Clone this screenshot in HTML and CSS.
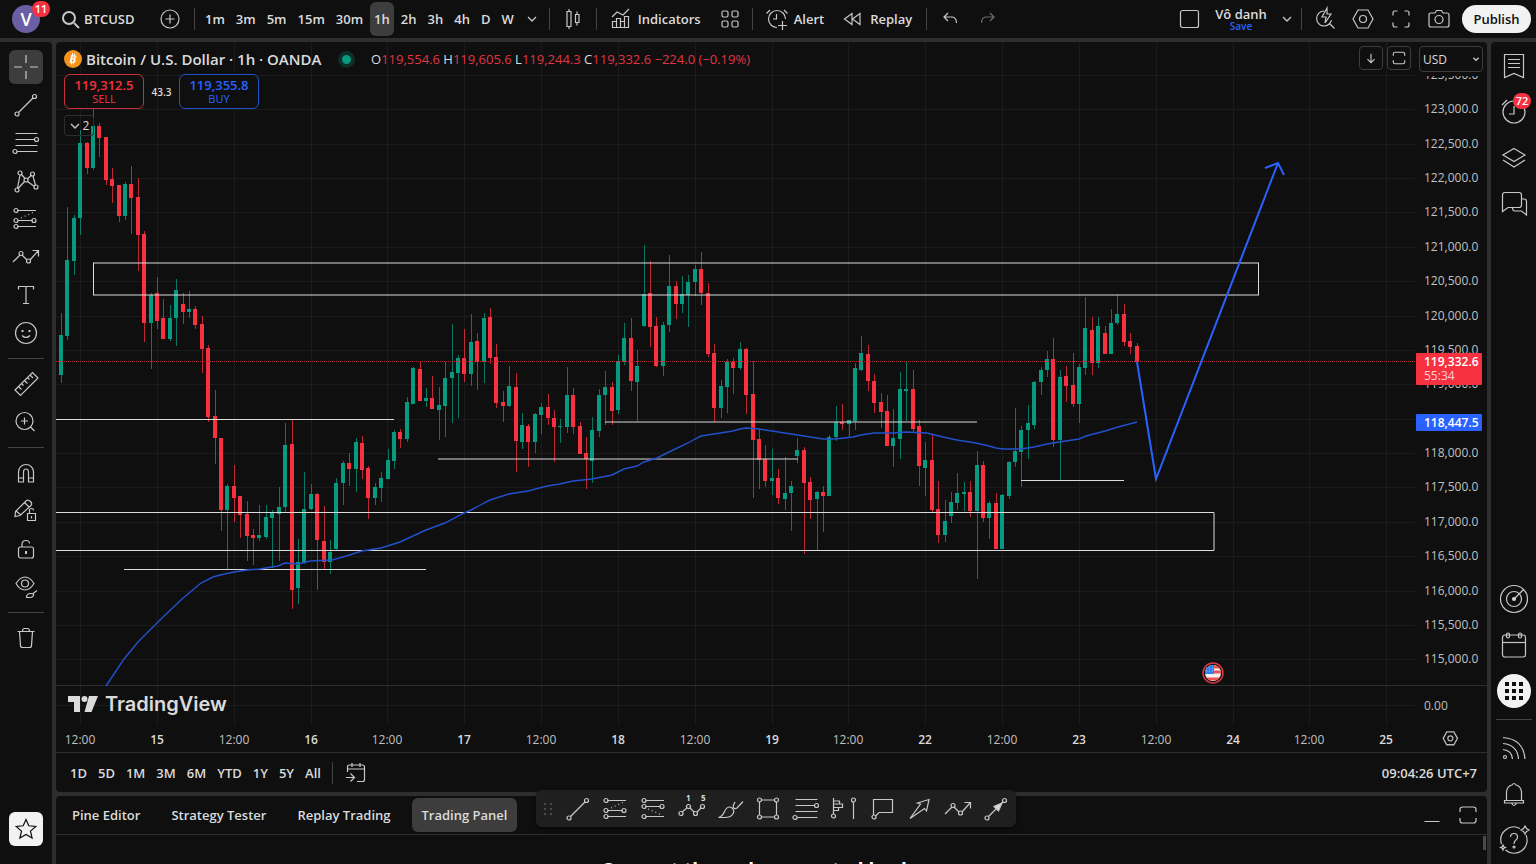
FILE: index.html
```html
<!DOCTYPE html>
<html lang="en">
<head>
    <meta charset="UTF-8">
    <meta name="viewport" content="width=device-width, initial-scale=1.0">
    <title>BTCUSD 119,332.6</title>
    <link rel="stylesheet" href="styles.css">
</head>
<body>
    <svg class="sprite">
        <symbol id="trend" viewBox="0 0 28 28"><circle cx="5" cy="23" r="2"/><circle cx="22.500" cy="5.500" r="2"/><path d="M6.500 21.500 21 7"/></symbol>
        <symbol id="fib" viewBox="0 0 28 28"><path d="M3.500 4.500h22M3.500 10.500h19M3.500 16.500h22M5 22.500h20.500"/><circle cx="24.500" cy="10.500" r="2"/><circle cx="3" cy="22.500" r="2"/></symbol>
        <symbol id="position" viewBox="0 0 28 28"><path d="M5.500 5.500H24M5.500 15.500h15M5.500 21.500H24"/><path stroke-dasharray="1 3" d="m9 13 13-6"/><circle cx="4" cy="5.500" r="2"/><circle cx="4" cy="15.500" r="2"/><circle cx="22" cy="15.500" r="2"/><circle cx="4" cy="21.500" r="2"/></symbol>
        <symbol id="short" viewBox="0 0 28 28"><path d="M5.500 5.500H24M5.500 11.500h15M5.500 21.500H24"/><path stroke-dasharray="1 3" d="m8 14 14 6"/><circle cx="4" cy="5.500" r="2"/><circle cx="4" cy="11.500" r="2"/><circle cx="22" cy="11.500" r="2"/><circle cx="4" cy="21.500" r="2"/></symbol>
        <symbol id="path" viewBox="0 0 28 28"><path d="m1 19 7-7M10 12l5 5M18 17l8-9M20.500 7.500h6v6"/><circle cx="9" cy="10.500" r="2"/><circle cx="16.500" cy="18" r="2"/></symbol>
        <symbol id="hex" viewBox="0 0 28 28"><path d="M9 5h10l5 9-5 9H9l-5-9z"/><circle cx="14" cy="14" r="3.500"/></symbol>
        <symbol id="down" viewBox="0 0 12 12"><path d="m2 4 4 4 4-4"/></symbol>
        <symbol id="frame" viewBox="0 0 28 28"><path d="M6 11V8.500Q6 6 8.500 6h11Q22 6 22 8.500V11M6 17v2.500Q6 22 8.500 22h11q2.500 0 2.500-2.500V17"/></symbol>
    </svg>

    <header class="topbar">
        <button class="avatar" aria-label="Account">V<span class="badge">11</span></button>
        <button class="symbol-search"><svg class="icon" viewBox="0 0 28 28"><path stroke-width="2" d="m18 18 5 5"/><circle stroke-width="2" cx="13" cy="13" r="6"/></svg>BTCUSD</button>
        <button class="tool add" aria-label="Compare"><svg class="icon" viewBox="0 0 28 28"><circle cx="14" cy="14" r="9"/><path d="M14 9.500v9M9.500 14h9"/></svg></button>
        <span class="sep"></span>
        <nav class="intervals">
            <button>1m</button>
            <button>3m</button>
            <button>5m</button>
            <button>15m</button>
            <button>30m</button>
            <button class="active">1h</button>
            <button>2h</button>
            <button>3h</button>
            <button>4h</button>
            <button>D</button>
            <button>W</button>
            <button class="more" aria-label="More intervals"><svg class="chev" viewBox="0 0 12 12"><use href="#down"/></svg></button>
        </nav>
        <span class="sep"></span>
        <button class="tool candles" aria-label="Candles"><svg class="icon" viewBox="0 0 28 28"><path d="M8 6.500h4v15H8zM10 4v2.500M10 21.500V24M16.500 9.500h3.500v8h-3.500zM18 6.500v3M18 17.500v3"/></svg></button>
        <span class="sep"></span>
        <button class="wide"><svg class="icon" viewBox="0 0 28 28"><path d="m5 12 5-5 6 3 6-6M5.500 22.500v-6h4v6M9.500 22.500v-9h4v9M13.500 22.500v-6h4v6M17.500 22.500v-11h4v11M5 22.500h17"/></svg>Indicators</button>
        <button class="tool templates" aria-label="Templates"><svg class="icon" viewBox="0 0 28 28"><rect x="6" y="6" width="6" height="6" rx="1.500"/><rect x="16" y="6" width="6" height="6" rx="1.500"/><rect x="6" y="16" width="6" height="6" rx="1.500"/><rect x="16" y="16" width="6" height="6" rx="1.500"/></svg></button>
        <span class="sep"></span>
        <button class="wide"><svg class="icon" viewBox="0 0 28 28"><path d="M14 22.500a8.500 8.500 0 1 1 8.500-8.500M13.500 9v5H10M3.500 8.500 7 5M24.500 8.500 21 5M19.500 16v9M15 20.500h9"/></svg>Alert</button>
        <button class="wide replay"><svg class="icon" viewBox="0 0 28 28"><path d="m13 8.500-7.500 5.500 7.500 5.500zM21 8.500 13.500 14l7.500 5.500z"/></svg>Replay</button>
        <span class="sep"></span>
        <button class="tool" aria-label="Undo"><svg class="icon" viewBox="0 0 28 28"><path d="m12 8-4 4 4 4M8 12h8q4.500.500 4.500 6"/></svg></button>
        <button class="tool dim" aria-label="Redo"><svg class="icon" viewBox="0 0 28 28"><path d="m16 8 4 4-4 4M20 12h-8q-4.500.500-4.500 6"/></svg></button>

        <div class="topbar-right">
            <button class="tool" aria-label="Layout"><svg class="icon" viewBox="0 0 28 28"><rect x="4.500" y="5.500" width="18" height="17" rx="2"/></svg></button>
            <button class="layout-name">Vô danh<span>Save</span></button>
            <button class="small" aria-label="Manage layouts"><svg class="chev" viewBox="0 0 12 12"><use href="#down"/></svg></button>
            <span class="sep"></span>
            <button class="tool" aria-label="Quick search"><svg class="icon" viewBox="0 0 28 28"><path d="M13 6a7.500 7.500 0 1 0 7.500 9M18.500 18.500l5 5M16 3l-5 9h4l-1 6 6-9h-4z"/></svg></button>
            <button class="tool" aria-label="Settings"><svg class="icon" viewBox="0 0 28 28"><use href="#hex"/></svg></button>
            <button class="tool" aria-label="Fullscreen"><svg class="icon" viewBox="0 0 28 28"><path d="M6 10.500V8q0-2 2-2h2.500M17.500 6H20q2 0 2 2v2.500M22 17.500V20q0 2-2 2h-2.500M10.500 22H8q-2 0-2-2v-2.500"/></svg></button>
            <button class="tool" aria-label="Snapshot"><svg class="icon" viewBox="0 0 28 28"><path d="M6 8h4l1.500-2.500h5L18 8h4q2 0 2 2v10q0 2-2 2H6q-2 0-2-2V10q0-2 2-2z"/><circle cx="14" cy="14.500" r="4"/></svg></button>
            <button class="publish">Publish</button>
        </div>
    </header>

    <div class="workspace">
        <aside class="drawbar">
            <button class="active" aria-label="Cross"><svg class="icon" viewBox="0 0 28 28"><path d="M14 2v8M14 18v8M2 14h8M18 14h8"/></svg></button>
            <button aria-label="Trend line"><svg class="icon" viewBox="0 0 28 28"><use href="#trend"/></svg></button>
            <button aria-label="Fib retracement"><svg class="icon" viewBox="0 0 28 28"><use href="#fib"/></svg></button>
            <button aria-label="XABCD pattern"><svg class="icon" viewBox="0 0 28 28"><path d="M5.500 21 8 8M9.500 7.500l4 4.500M15.500 12l4-4M21 9l2.500 9.500M6 21.500l6.500-7M15.500 14.500l7 5"/><circle cx="5" cy="23" r="2"/><circle cx="8" cy="6" r="2"/><circle cx="14" cy="13" r="2"/><circle cx="20.500" cy="7" r="2"/><circle cx="24" cy="20" r="2"/></svg></button>
            <button aria-label="Long position"><svg class="icon" viewBox="0 0 28 28"><use href="#position"/></svg></button>
            <button aria-label="Path"><svg class="icon" viewBox="0 0 28 28"><use href="#path"/></svg></button>
            <button aria-label="Text"><svg class="icon" viewBox="0 0 28 28"><path d="M6.500 8.500v-3h15v3M14 5.500v17M11 22.500h6"/></svg></button>
            <button aria-label="Emoji"><svg class="icon" viewBox="0 0 28 28"><circle cx="14" cy="14" r="10.500"/><path d="M10 16.500q4 4 8 0"/><path stroke-width="2" d="M10.500 11v2M17.500 11v2"/></svg></button>
            <hr>
            <button aria-label="Measure"><svg class="icon" viewBox="0 0 28 28"><path d="M3 20 20.500 2.500 26 8 8.500 25.500zM6.500 16.500l3 3M9.500 13.500l2 2M12.500 10.500l3 3M15.500 7.500l2 2M18 5l3 3"/></svg></button>
            <button aria-label="Zoom in"><svg class="icon" viewBox="0 0 28 28"><circle cx="12.500" cy="13" r="8.500"/><path d="m18.500 19 4 4M12.500 9.500v7M9 13h7"/></svg></button>
            <hr>
            <button aria-label="Magnet"><svg class="icon" viewBox="0 0 28 28"><path d="M6.500 23V13a7.500 7.500 0 0 1 15 0v10h-5V13q0-3-2.500-3t-2.500 3v10zM6.500 19h5M16.500 19h5"/></svg></button>
            <button aria-label="Keep drawing"><svg class="icon" viewBox="0 0 28 28"><path d="m3.500 14.500 11-11q2-1 4 1t.500 4l-11 10-5 1zM12.500 5.500l4.500 4.500M4 14l5 4M15.500 16.500h8v7h-8zM17.500 16.500v-3q0-2 2-2t2 2M19.500 19v2.500"/></svg></button>
            <button aria-label="Lock drawings"><svg class="icon" viewBox="0 0 28 28"><rect x="6.500" y="12" width="15" height="11" rx="2"/><path d="M10 12V9.500q0-4 4-4 3.500 0 3.500 3"/><path stroke-width="2" d="M14 16v3"/></svg></button>
            <button aria-label="Hide drawings"><svg class="icon" viewBox="0 0 28 28"><path d="M4 10.500q4-6.500 9-6.500t9 6.500q-4 6.500-9 6.500t-9-6.500z"/><circle cx="13" cy="10.500" r="3.500"/><path d="M14.500 24.500q0-4 4-4t3 2-3 2zM21 20.500l4-3"/></svg></button>
            <hr>
            <button aria-label="Remove"><svg class="icon" viewBox="0 0 28 28"><path d="M5.500 7.500h17M10.500 7.500q0-3 2-3h3q2 0 2 3M7.500 7.500l1 14q0 2 2 2h7q2 0 2-2l1-14"/></svg></button>
            <button class="favorite" aria-label="Favorites"><svg class="icon" viewBox="0 0 28 28"><path d="m14 4.500 2.800 6.300 7 .700-5.300 4.600 1.600 6.900-6.100-3.600L7.900 23l1.600-6.900-5.300-4.600 7-.700z"/></svg></button>
        </aside>

        <main class="center">
            <section class="chart-panel">
                <div class="chart-area">
                    <svg class="chart" id="chart" viewBox="56 42 1431 710" preserveAspectRatio="xMaxYMin meet"></svg>
                    <div class="legend">
                        <div class="title-row">
                            <svg class="coin" viewBox="0 0 18 18"><circle cx="9" cy="9" r="9"/><text x="9" y="13" text-anchor="middle">B</text><path d="M8.500 3v2M10.500 3.500v2M7.500 12.500v2M9.500 12.500v2"/></svg>
                            <h1>Bitcoin / U.S. Dollar · 1h · OANDA</h1>
                            <span class="status"></span>
                            <p class="ohlc">O<b>119,554.6</b> H<b>119,605.6</b> L<b>119,244.3</b> C<b>119,332.6</b> <b>−224.0 (−0.19%)</b></p>
                        </div>
                        <div class="trade-row">
                            <button class="sell"><strong>119,312.5</strong>SELL</button>
                            <span class="spread">43.3</span>
                            <button class="buy"><strong>119,355.8</strong>BUY</button>
                        </div>
                        <button class="collapse"><svg class="chev" viewBox="0 0 12 12"><use href="#down"/></svg>2</button>
                    </div>
                    <div class="scale-tools">
                        <button aria-label="Move pane down"><svg class="icon" viewBox="0 0 28 28"><path d="M14 8v12M9 15.500l5 5 5-5"/></svg></button>
                        <button aria-label="Maximize pane"><svg class="icon" viewBox="0 0 28 28"><use href="#frame"/></svg></button>
                        <div class="currency">
                            <select aria-label="Currency"><option>USD</option></select>
                            <svg class="chev" viewBox="0 0 12 12"><use href="#down"/></svg>
                        </div>
                    </div>
                    <div class="logo">
                        <svg viewBox="0 0 30 16"><path d="M0 0h12v16H6V6H0zM21 0h9l-6.500 16h-7z"/><circle cx="16.500" cy="3" r="3"/></svg>
                        TradingView
                    </div>
                </div>
                <div class="rangebar">
                    <button>1D</button>
                    <button>5D</button>
                    <button>1M</button>
                    <button>3M</button>
                    <button>6M</button>
                    <button>YTD</button>
                    <button>1Y</button>
                    <button>5Y</button>
                    <button>All</button>
                    <span class="sep"></span>
                    <button class="goto" aria-label="Go to"><svg class="icon" viewBox="0 0 28 28"><path d="M5.500 13V8q0-2 2-2h13q2 0 2 2v12.500q0 2-2 2H15M5.500 10h17M10 4v4M18 4v4M4 18.500h8M8.500 14.500l4 4-4 4"/></svg></button>
                    <button class="clock">09:04:26 UTC+7</button>
                </div>
            </section>

            <section class="bottom-panel">
                <div class="tabs">
                    <button>Pine Editor</button>
                    <button>Strategy Tester</button>
                    <button>Replay Trading</button>
                    <button class="active">Trading Panel</button>
                    <div class="panel-tools">
                        <button aria-label="Minimize"><svg class="icon" viewBox="0 0 28 28"><path d="M6.500 20.500h15"/></svg></button>
                        <button aria-label="Maximize"><svg class="icon" viewBox="0 0 28 28"><use href="#frame"/></svg></button>
                    </div>
                </div>
                <div class="panel-body">
                    <h2>Connect through supported brokers</h2>
                    <span class="scroll-thumb"></span>
                </div>
            </section>

            <div class="floatbar">
                <svg class="grip" viewBox="0 0 10 14"><path d="M1 1h2v2H1zM7 1h2v2H7zM1 6h2v2H1zM7 6h2v2H7zM1 11h2v2H1zM7 11h2v2H7z"/></svg>
                <button aria-label="Trend line"><svg class="icon" viewBox="0 0 28 28"><use href="#trend"/></svg></button>
                <button aria-label="Long position"><svg class="icon" viewBox="0 0 28 28"><use href="#position"/></svg></button>
                <button aria-label="Short position"><svg class="icon" viewBox="0 0 28 28"><use href="#short"/></svg></button>
                <button aria-label="Elliott wave"><svg class="icon" viewBox="0 0 28 28"><path d="m4 17 5-4M12 13l4 4M19 17l4-4"/><circle cx="3" cy="18.500" r="2"/><circle cx="10.500" cy="11.500" r="2"/><circle cx="17.500" cy="18.500" r="2"/><circle cx="24.500" cy="11.500" r="2"/><text x="8" y="6">1</text><text x="23" y="6">5</text></svg></button>
                <button aria-label="Brush"><svg class="icon" viewBox="0 0 28 28"><path d="M2.500 22.500q4-1 6-6 3-6 7-4 4 3 1 7-2 3-8 3zM17 11q1 4 4 2l6-6.500M17 11l2-4"/></svg></button>
                <button aria-label="Rectangle"><svg class="icon" viewBox="0 0 28 28"><path d="M7.500 5h13M7.500 22h13M5.500 7v13M22.500 7v13"/><circle cx="5.500" cy="5" r="2"/><circle cx="22.500" cy="5" r="2"/><circle cx="5.500" cy="22" r="2"/><circle cx="22.500" cy="22" r="2"/></svg></button>
                <button aria-label="Fib retracement"><svg class="icon" viewBox="0 0 28 28"><use href="#fib"/></svg></button>
                <button aria-label="Volume profile"><svg class="icon" viewBox="0 0 28 28"><path d="M3.500 3v16M3.500 6h6v3h-6M3.500 9h9v3.500h-9M3.500 12.500h5v3h-5M23.500 7v17"/><circle cx="3.500" cy="21" r="2"/><circle cx="23.500" cy="5" r="2"/></svg></button>
                <button aria-label="Callout"><svg class="icon" viewBox="0 0 28 28"><path d="M5.500 20V4.500h19v13H11L7.500 21"/><circle cx="6" cy="22" r="2"/></svg></button>
                <button aria-label="Arrow"><svg class="icon" viewBox="0 0 28 28"><path d="M4 23.500 14.500 9l-3-1L23 4.500 20.500 16l-2-2.500z"/></svg></button>
                <button aria-label="Path"><svg class="icon" viewBox="0 0 28 28"><use href="#path"/></svg></button>
                <button aria-label="Arrow line"><svg class="icon" viewBox="0 0 28 28"><use href="#trend"/><path class="solid" d="m20 8-8 3.500 4.500 4.500z"/></svg></button>
            </div>
        </main>

        <aside class="sidebar">
            <button aria-label="Watchlist"><svg class="icon" viewBox="0 0 28 28"><path d="M4.500 2.500h19v23l-9.500-4-9.500 4zM8 7.500h12M8 11.500h12M8 15.500h12"/></svg></button>
            <button aria-label="Alerts"><svg class="icon" viewBox="0 0 28 28"><circle cx="14" cy="14" r="11"/><path d="M14 8v8H9M2 7l5-5"/></svg><span class="badge">72</span></button>
            <button aria-label="Object tree"><svg class="icon" viewBox="0 0 28 28"><path d="m14 4.500 11 6.500-11 6.500L3 11zM3 16l11 7 11-7"/></svg></button>
            <button aria-label="Chats"><svg class="icon" viewBox="0 0 28 28"><path d="M5 2.500h14q2.500 0 2.500 2.500v10q0 2.500-2.500 2.500H8l-5.500 4V5q0-2.500 2.500-2.500zM21.500 9H24q2.500 0 2.500 2.500V25l-5-4H15q-2.500 0-2.500-3.500"/></svg></button>
            <button class="push" aria-label="Screeners"><svg class="icon" viewBox="0 0 28 28"><circle cx="14" cy="14" r="13.500"/><circle cx="14" cy="14" r="7.500"/><path d="m14 14 9.500-9.500"/><circle class="solid" cx="14" cy="14" r="1.500"/></svg></button>
            <button aria-label="Calendar"><svg class="icon" viewBox="0 0 28 28"><rect x="2.500" y="4" width="23" height="22" rx="2.500"/><path d="M2.500 11.500h23"/><rect x="6.500" y="2" width="3" height="5" rx="1.500"/><rect x="18.500" y="2" width="3" height="5" rx="1.500"/></svg></button>
            <button aria-label="Products"><svg class="apps" viewBox="0 0 34 34"><circle cx="17" cy="17" r="17"/><path d="M8 8h4v4H8zM15 8h4v4h-4zM22 8h4v4h-4zM8 15h4v4H8zM15 15h4v4h-4zM22 15h4v4h-4zM8 22h4v4H8zM15 22h4v4h-4zM22 22h4v4h-4z"/></svg></button>
            <hr>
            <button aria-label="Streams"><svg class="icon" viewBox="0 0 28 28"><circle cx="5" cy="23" r="1.500"/><path d="M3 15.500q9 1 9.500 9.500M3 9.500Q17.500 11 18.500 25M3 3.500Q23.500 5 25 25"/></svg></button>
            <button aria-label="Notifications"><svg class="icon" viewBox="0 0 28 28"><path d="M4.500 20.500h19v2.500h-19zM6.500 20.500v-9Q7.500 6 12 5q2-3 4 0 4.500 1 5.500 6.500v9M11.500 23q2.500 5 5 0"/></svg></button>
            <button aria-label="Help"><svg class="icon" viewBox="0 0 28 28"><path d="M20 2.500A13 13 0 0 0 1.500 18M5.500 24A13 13 0 0 0 26 9M25 0l1.500 2.500L29 4l-2.500 1.500L25 8l-1.500-2.500L21 4l2.500-1.500zM3 19l.800 1.700 1.700.800-1.700.800L3 24l-.800-1.700-1.700-.800 1.700-.800zM10.500 11q0-3.500 3.500-3.500t3.500 3.500q0 2-2 3.500-1.500 1-1.500 3.500"/><circle cx="14" cy="21" r="1"/></svg></button>
        </aside>
    </div>
    <script src="chart.js"></script>
</body>
</html>
```

FILE: styles.css
```css
* {
    box-sizing: border-box;
}

body {
    margin: 0;
    height: 100vh;
    display: flex;
    flex-direction: column;
    gap: 4px;
    overflow: hidden;
    background: #2e2e2e;
    color: #dbdbdb;
    font-family: "Open Sans", "Noto Sans", sans-serif;
    font-size: 13px;
}

button, select {
    font: inherit;
    color: inherit;
    background: none;
    border: none;
    padding: 0;
    margin: 0;
    cursor: pointer;
}

button {
    display: flex;
    align-items: center;
    justify-content: center;
    white-space: nowrap;
    flex-shrink: 0;
}

h1, h2, p {
    margin: 0;
}

hr {
    width: 36px;
    height: 1px;
    margin: 4px 0;
    border: none;
    background: #434343;
    flex-shrink: 0;
}

.sprite {
    display: none;
}

.icon {
    width: 28px;
    height: 28px;
    fill: none;
    stroke: #c8c8c8;
    stroke-width: 1.2;
    overflow: visible;
    flex-shrink: 0;
}

.icon text {
    font-size: 8px;
    font-weight: 700;
    fill: #dbdbdb;
    stroke: none;
}

.solid {
    fill: #dbdbdb;
}

.chev {
    width: 12px;
    height: 12px;
    fill: none;
    stroke: #c8c8c8;
    stroke-width: 1.3;
}

.sep {
    width: 1px;
    height: 22px;
    background: #434343;
    flex-shrink: 0;
}

.badge {
    position: absolute;
    min-width: 18px;
    height: 16px;
    padding: 0 2px;
    border-radius: 8px;
    background: #f7313f;
    color: #fff;
    font-size: 11px;
    font-weight: 600;
    line-height: 16px;
    text-align: center;
}

/* top toolbar */

.topbar {
    display: flex;
    align-items: center;
    height: 38px;
    padding: 0 5px 0 12px;
    background: #0f0f0f;
    font-weight: 600;
    flex-shrink: 0;
}

.avatar {
    position: relative;
    width: 28px;
    height: 28px;
    margin-right: 16px;
    border-radius: 50%;
    background: #6a5fa5;
    color: #fff;
    font-size: 18px;
}

.avatar .badge {
    top: -4px;
    left: 20px;
}

.symbol-search {
    width: 80px;
    justify-content: flex-start;
}

.add {
    margin: 0 5px 0 15px;
}

.tool {
    width: 38px;
    height: 38px;
}

.intervals {
    display: flex;
    gap: 1px;
    margin: 0 5px;
}

.intervals button {
    height: 34px;
    padding: 0 5px;
    border-radius: 6px;
}

.intervals .active {
    padding: 0 4px;
    margin: 0 1px;
    background: #3d3d3d;
}

.intervals .more {
    padding: 0 6px;
}

.topbar .sep + .tool {
    margin-left: 4px;
}

.candles {
    margin-right: 4px;
}

.templates {
    margin-right: 3px;
}

.wide {
    gap: 3px;
    padding: 0 10px;
}

.replay {
    padding: 0 14px 0 5px;
}

.dim {
    opacity: .5;
}

.topbar-right {
    display: flex;
    align-items: center;
    margin-left: auto;
}

.layout-name {
    width: 64px;
    flex-direction: column;
    line-height: 14px;
}

.layout-name span {
    color: #2962ff;
    font-size: 10px;
    line-height: 10px;
}

.small {
    width: 28px;
    height: 38px;
}

.publish {
    width: 69px;
    height: 28px;
    margin-left: 4px;
    border-radius: 14px;
    background: #f2f2f2;
    color: #0f0f0f;
}

/* columns */

.workspace {
    display: flex;
    gap: 4px;
    flex: 1;
    min-height: 0;
}

.drawbar {
    display: flex;
    flex-direction: column;
    align-items: center;
    gap: 4px;
    width: 52px;
    padding: 8px 0 18px;
    border-radius: 0 4px 0 0;
    background: #0f0f0f;
}

.drawbar button {
    width: 34px;
    height: 34px;
    border-radius: 6px;
}

.drawbar .active {
    background: #3d3d3d;
}

.drawbar .favorite {
    margin-top: auto;
    background: #f2f2f2;
}

.favorite .icon {
    stroke: #0f0f0f;
}

.sidebar {
    display: flex;
    flex-direction: column;
    align-items: center;
    width: 45px;
    padding: 1px 0;
    border-radius: 4px 0 0 0;
    background: #0f0f0f;
}

.sidebar button {
    position: relative;
    width: 45px;
    height: 46px;
}

.sidebar .badge {
    top: 4px;
    right: 5px;
}

.sidebar hr {
    margin: 5px 0;
}

.sidebar .push {
    margin-top: auto;
}

.apps {
    width: 34px;
    height: 34px;
    fill: #0f0f0f;
}

.apps circle {
    fill: #f2f2f2;
}

.center {
    position: relative;
    display: flex;
    flex-direction: column;
    gap: 4px;
    flex: 1;
    min-width: 0;
}

/* chart */

.chart-panel {
    display: flex;
    flex-direction: column;
    flex: 1;
    min-height: 0;
    border-radius: 4px;
    background: #0f0f0f;
}

.chart-area {
    position: relative;
    flex: 1;
    min-height: 0;
}

.chart {
    display: block;
    width: 100%;
    height: 100%;
}

.grid line {
    stroke: #1b1b1b;
}

.pane-line {
    stroke: #2e2e2e;
}

.price-line {
    stroke: #b02a36;
    stroke-dasharray: 1 1;
}

.up {
    fill: #089981;
}

.down {
    fill: #f7313f;
}

.wick {
    opacity: .75;
}

.drawing {
    fill: none;
    stroke: #dbdbdb;
}

.average {
    fill: none;
    stroke: #2350cc;
    stroke-width: 1.4;
}

.forecast {
    fill: none;
    stroke: #2962ff;
    stroke-width: 2;
}

.axis text {
    fill: #c0c0c0;
    font-size: 12px;
}

.axis .center-text {
    text-anchor: middle;
}

.axis .day {
    fill: #dbdbdb;
    font-weight: 600;
}

.axis .tag {
    fill: #fff;
    font-weight: 600;
}

.axis .countdown {
    fill: #ffd0d3;
}

.tag-up {
    fill: #2962ff;
}

.axis-icon {
    fill: none;
    stroke: #b8b8b8;
    stroke-width: 1.8;
}

.legend {
    position: absolute;
    top: 6px;
    left: 8px;
}

.title-row {
    display: flex;
    align-items: center;
    height: 22px;
}

.title-row h1 {
    width: 236px;
    margin-left: 4px;
    font-size: 15px;
    font-weight: 600;
    line-height: 20px;
    white-space: nowrap;
}

.coin {
    width: 18px;
    height: 18px;
    fill: #f7931a;
    stroke: #fff;
    stroke-width: 1;
}

.coin circle {
    stroke: none;
}

.coin text {
    fill: #fff;
    stroke: none;
    font-size: 11px;
    font-weight: 700;
    font-style: italic;
}

.status {
    width: 17px;
    height: 17px;
    margin: 0 16px;
    border: 4px solid #102e28;
    border-radius: 50%;
    background: #089981;
}

.ohlc {
    font-size: 13px;
    line-height: 20px;
    white-space: pre;
}

.ohlc b {
    color: #e03543;
    font-weight: 400;
}

.trade-row {
    display: flex;
    align-items: center;
    margin-top: 4px;
}

.sell, .buy {
    flex-direction: column;
    width: 80px;
    height: 35px;
    border: 1px solid #c62f3b;
    border-radius: 6px;
    color: #f7313f;
    background: #0f0f0f;
    font-size: 11px;
    line-height: 13px;
}

.buy {
    border-color: #2350cc;
    color: #2962ff;
}

.trade-row strong {
    font-size: 13px;
    font-weight: 600;
    line-height: 14px;
}

.spread {
    width: 35px;
    font-size: 10px;
    font-weight: 600;
    text-align: center;
}

.collapse {
    gap: 2px;
    width: 30px;
    height: 21px;
    margin-top: 6px;
    border: 1px solid #2e2e2e;
    border-radius: 3px;
    font-size: 12px;
}

.scale-tools {
    position: absolute;
    top: 4px;
    right: 4px;
    display: flex;
    gap: 4px;
}

.scale-tools > button {
    width: 24px;
    height: 24px;
    border: 1px solid #3d3d3d;
    border-radius: 4px;
}

.scale-tools .icon {
    width: 20px;
    height: 20px;
    stroke-width: 1.6;
}

.currency {
    position: relative;
    margin-left: 4px;
}

.currency select {
    width: 64px;
    height: 26px;
    padding: 0 3px;
    border: 1px solid #3d3d3d;
    border-radius: 4px;
    background: #0f0f0f;
    font-size: 12px;
    appearance: none;
}

.currency .chev {
    position: absolute;
    top: 9px;
    right: 3px;
    width: 8px;
    height: 8px;
    stroke-width: 2;
    pointer-events: none;
}

.logo {
    position: absolute;
    bottom: 34px;
    left: 12px;
    display: flex;
    align-items: center;
    gap: 7px;
    font-family: Inter, sans-serif;
    font-size: 20px;
    font-weight: 600;
    line-height: 28px;
}

.logo svg {
    width: 30px;
    height: 16px;
    fill: #dbdbdb;
}

.rangebar {
    display: flex;
    align-items: center;
    gap: 1px;
    height: 40px;
    padding: 0 10px 0 9px;
    border-top: 1px solid #2e2e2e;
    font-weight: 600;
    flex-shrink: 0;
}

.rangebar > button {
    padding: 0 5px;
}

.rangebar .sep {
    margin: 0 3px 0 5px;
}

.rangebar .clock {
    margin-left: auto;
    padding: 0;
}

/* bottom panel */

.bottom-panel {
    height: 68px;
    border-radius: 4px 4px 0 0;
    background: #0f0f0f;
    overflow: hidden;
    flex-shrink: 0;
}

.tabs {
    display: flex;
    align-items: center;
    gap: 11px;
    height: 39px;
    padding: 0 5px 0 6px;
    border-bottom: 1px solid #2e2e2e;
    font-weight: 600;
}

.tabs > button {
    height: 34px;
    padding: 0 10px;
    border-radius: 6px;
}

.tabs .active {
    background: #3d3d3d;
}

.panel-tools {
    display: flex;
    gap: 8px;
    margin-left: auto;
}

.panel-body {
    position: relative;
}

.panel-body h2 {
    padding-top: 21px;
    color: #fff;
    font-size: 19px;
    line-height: 28px;
    text-align: center;
    white-space: nowrap;
}

.scroll-thumb {
    position: absolute;
    top: 1px;
    right: 1px;
    width: 3px;
    height: 14px;
    background: #4a4a4a;
}

.floatbar {
    position: absolute;
    bottom: 37px;
    left: 50%;
    display: flex;
    align-items: center;
    width: 480px;
    height: 37px;
    margin-left: -236px;
    padding-left: 7px;
    border-radius: 6px;
    background: #1f1f1f;
    box-shadow: 0 2px 4px rgba(0, 0, 0, .4);
}

.floatbar button {
    width: 38px;
    height: 37px;
}

.grip {
    width: 10px;
    height: 14px;
    margin-right: 6px;
    fill: #4a4a4a;
}
```

FILE: chart.js
```js
// each candle: direction, high, body top, body bottom, low
const candles = `
g 313 335 375 383|g 207 260 336 340|g 215 218 261 275|g 130 143 218 235|r 142 143 168 174|g 109 126 168 170
r 123 126 138 157|r 137 137 180 185|r 168 179 186 203|r 185 185 216 222|g 182 184 216 220|r 166 184 198 234
r 178 197 235 271|r 231 234 323 342|g 293 295 323 369|r 277 293 321 329|r 299 318 339 339|g 305 318 339 341
g 279 290 318 346|r 293 304 312 324|g 291 309 312 318|r 306 309 325 329|r 316 324 349 373|r 345 348 417 422
r 390 416 438 464|r 438 438 510 531|g 484 486 510 569|r 465 486 498 522|r 496 496 515 538|r 501 514 536 561
r 529 535 538 565|g 505 535 538 541|g 505 517 537 539|g 510 512 518 568|g 487 507 514 561|g 423 445 507 512
r 419 444 590 609|g 539 562 588 604|g 472 509 563 564|g 484 494 509 510|r 493 494 540 590|r 506 541 562 570
g 540 552 562 574|g 478 483 549 550|g 461 463 483 505|r 453 463 469 486|g 438 442 469 492|r 436 443 470 479
r 466 468 498 519|g 483 487 498 505|g 472 478 488 502|g 449 460 479 479|g 430 432 461 469|r 429 432 439 448
g 397 402 439 442|g 367 368 404 404|r 361 369 401 401|g 388 398 401 407|r 376 398 409 409|g 387 405 410 440
g 362 378 406 437|g 324 372 378 423|g 355 358 373 418|r 329 358 374 382|g 314 342 374 386|r 333 341 362 390
g 313 318 362 383|r 308 317 358 364|r 344 357 403 408|r 391 402 406 422|g 366 386 406 407|r 373 387 441 472
g 413 425 442 449|r 424 426 442 467|g 413 414 442 453|g 403 407 415 434|r 394 407 418 425|r 410 418 427 462
g 419 426 427 443|g 367 395 427 433|r 388 395 427 434|r 422 426 454 454|r 437 453 459 489|g 417 430 461 483
g 389 395 431 437|g 371 387 395 425|r 382 387 411 425|g 355 361 410 414|g 323 338 362 365|r 318 338 381 391
g 350 366 382 421|g 245 294 326 327|r 261 293 327 347|r 317 326 366 367|g 322 325 366 376|g 255 286 325 332
r 281 286 304 319|g 276 294 304 313|g 275 282 295 327|g 265 269 282 296|r 252 269 293 305|r 283 293 354 357
r 344 353 408 422|g 380 386 408 418|g 359 362 387 413|r 358 362 368 394|g 342 349 368 370|r 348 349 395 414
r 361 394 440 498|r 429 439 460 489|r 445 459 481 487|g 449 478 481 495|r 469 478 498 504|g 457 493 499 510
g 481 486 493 531|g 438 450 456 463|r 447 450 483 554|r 477 482 500 519|g 491 492 499 551|r 486 492 496 532
g 435 437 496 496|g 406 422 437 441|r 404 422 424 430|g 420 420 424 438|g 363 368 421 430|g 336 353 370 371
r 345 354 381 391|r 374 381 403 413|r 393 402 412 428|r 395 411 446 446|g 409 438 446 467|g 372 389 439 459
g 362 389 391 421|r 370 389 429 433|r 420 426 466 486|g 442 460 468 496|r 434 460 510 513|r 481 509 535 543
g 500 521 535 542|g 492 502 516 523|g 473 493 503 510|g 482 492 494 511|r 481 492 511 517|g 451 465 511 579
r 461 465 518 522|g 501 503 518 539|r 493 503 549 549|g 494 495 549 549|g 461 462 496 499|g 408 451 462 467
g 426 430 452 487|g 405 423 430 459|g 381 382 425 429|g 367 370 382 395|g 351 359 370 377|r 338 359 440 447
g 370 377 440 480|r 366 376 386 402|r 353 385 404 407|g 364 367 404 423|g 297 328 368 375|r 317 330 363 375
g 317 326 363 368|r 326 333 354 354|g 309 323 354 354|g 295 314 323 325|r 304 314 342 346|r 333 341 347 354
r 343 346 362 362`.trim().split(/[|\n]/);

const average = "106,686 124,659 138,642 157,623 163,617 182,599 201,583 213,577 220,575 234,572 247,570 260,569 278,566 285,563 298,564 310,561 332,560 343,557 362,551 381,548 400,542 426,530 445,523 464,513 471,510 477,507 484,503 490,500 509,494 528,491 547,486 560,484 573,481 592,479 612,475 624,469 637,466 644,462 657,458 669,452 688,443 695,439 701,436 714,434 733,431 740,429 746,428 759,429 772,431 791,434 804,436 823,439 835,439 853,437 861,435 874,433 893,433 906,432 927,433 943,437 957,440 976,443 989,446 996,448 1003,449 1021,449 1034,447 1047,444 1059,442 1079,439 1086,436 1105,431 1118,427 1137,422";

const times = ["12:00", "15", "12:00", "16", "12:00", "17", "12:00", "18", "12:00", "19", "12:00", "22", "12:00", "23", "12:00", "24", "12:00", "25"];

let grid = "";
let labels = "";

times.forEach((time, i) => {
    const y = Math.round(75 + i * 34.37);
    const price = (123500 - i * 500).toLocaleString("en-US") + ".0";
    grid += `<line x1="56" x2="1415" y1="${y + 0.5}" y2="${y + 0.5}"/>`;
    labels += `<text x="1424" y="${y + 4}">${price}</text>`;

    const x = Math.round(80 + i * 76.84);
    const day = time.length === 2 ? " day" : "";
    grid += `<line x1="${x + 0.5}" x2="${x + 0.5}" y1="42" y2="725"/>`;
    labels += `<text class="center-text${day}" x="${x}" y="744">${time}</text>`;
});

let bars = "";
candles.forEach((row, i) => {
    const [dir, high, top, bottom, low] = row.split(" ");
    const x = Math.round(61 + i * 6.403);
    const cls = dir === "g" ? "up" : "down";
    bars += `<rect class="wick ${cls}" x="${x}" y="${high}" width="1" height="${low - high}"/>`;
    bars += `<rect class="${cls}" x="${x - 2}" y="${top}" width="4" height="${Math.max(bottom - top, 1)}"/>`;
});

document.getElementById("chart").innerHTML = `
    <g class="grid">${grid}<line x1="56" x2="1415" y1="705.5" y2="705.5"/></g>
    <line class="pane-line" x1="56" x2="1487" y1="685.5" y2="685.5"/>
    ${bars}
    <g class="drawing">
        <rect x="93.5" y="263" width="1165" height="32"/>
        <path d="M56 512.5h1158v38H56M56 419.5h338M124 569.5h302M438 459h360M605 422h372M1021 480.5h103"/>
    </g>
    <polyline class="average" points="${average}"/>
    <line class="price-line" x1="56" x2="1415" y1="361.5" y2="361.5"/>
    <path class="forecast" d="m1137 362 19 117 122-316M1265 168l13-5 6 12"/>
    <g class="axis">
        <clipPath id="scale"><rect x="56" y="76" width="1431" height="676"/></clipPath>
        <g clip-path="url(#scale)">${labels}</g>
        <text x="1424" y="710">0.00</text>
        <rect class="down" x="1416" y="353" width="66" height="32" rx="1"/>
        <text class="tag" x="1424" y="366">119,332.6</text>
        <text class="countdown" x="1424" y="380">55:34</text>
        <rect class="tag-up" x="1416" y="414" width="66" height="17" rx="1"/>
        <text class="tag" x="1424" y="427">118,447.5</text>
    </g>
    <svg class="axis-icon" x="1442" y="730" width="20" height="20" viewBox="2 2 24 24"><use href="#hex"/></svg>
    <clipPath id="flag"><circle cx="1213" cy="673" r="8"/></clipPath>
    <circle cx="1213" cy="673" r="10" fill="#0f0f0f" stroke="#e03543" stroke-width="1.5"/>
    <g clip-path="url(#flag)">
        <rect x="1205" y="665" width="16" height="16" fill="#f2f2f2"/>
        <path d="M1205 667h16M1205 672h16M1205 679h16" stroke="#ef5350" stroke-width="3"/>
        <rect x="1205" y="665" width="9" height="9" fill="#2f80ed"/>
        <path d="M1206 668h8M1206 671h8" stroke="#9cc6ff" stroke-dasharray="1 2"/>
    </g>`;
```
